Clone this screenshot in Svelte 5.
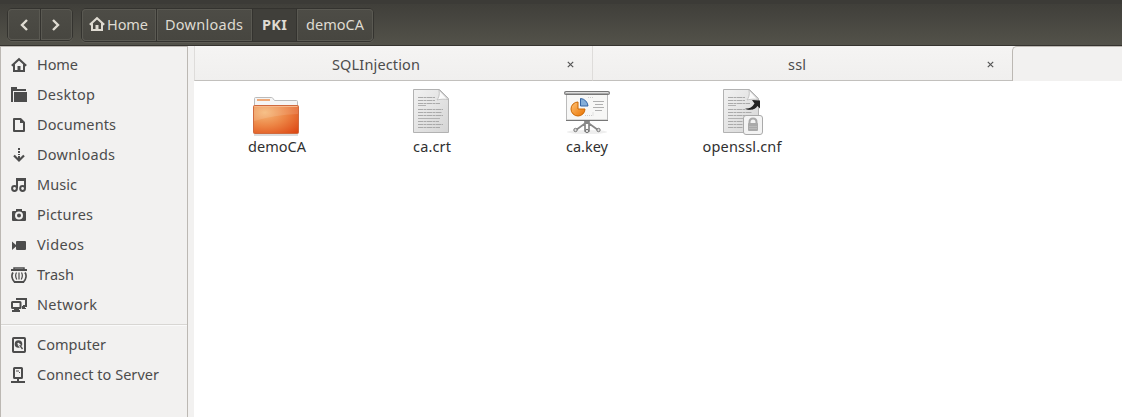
<script>
  const places = [
    { name: 'Home', icon: 'home', w: 41 },
    { name: 'Desktop', icon: 'desktop', w: 58 },
    { name: 'Documents', icon: 'document', w: 79 },
    { name: 'Downloads', icon: 'download', w: 78 },
    { name: 'Music', icon: 'music', w: 40 },
    { name: 'Pictures', icon: 'camera', w: 56 },
    { name: 'Videos', icon: 'video', w: 47 },
    { name: 'Trash', icon: 'trash', w: 37 },
    { name: 'Network', icon: 'network', w: 60 }
  ];
  const devices = [
    { name: 'Computer', icon: 'disk', w: 69 },
    { name: 'Connect to Server', icon: 'server', w: 122 }
  ];
  const files = [
    { name: 'demoCA', icon: 'folder', w: 58 },
    { name: 'ca.crt', icon: 'text', w: 38 },
    { name: 'ca.key', icon: 'slides', w: 42 },
    { name: 'openssl.cnf', icon: 'locked', w: 79 }
  ];
</script>

{#snippet symbol(name)}
  <svg class="symbol" viewBox="0 0 16 16" width="16" height="16">
    {#if name === 'home'}
      <path d="M.8 8.7 8 2.2l7.2 6.5M3 7.5V14h10V7.5" fill="none" stroke="currentColor" stroke-width="2" />
      <path d="M6.5 9h3v5h-3z" fill="currentColor" />
    {:else if name === 'desktop'}
      <path d="M0 0h6v2h9v2H2v11H0zM3 5h13v10H3z" fill="currentColor" />
    {:else if name === 'document'}
      <path d="M3 2h6.5L13 5.5V14H3z" fill="none" stroke="currentColor" stroke-width="2" stroke-linejoin="round" />
      <path d="M9 2v4h4.5z" fill="currentColor" />
    {:else if name === 'download'}
      <path d="M7 1h2v2H7zM7 4h2v2H7zM7 7h2v1H7zM7 9h2v4H7z" fill="currentColor" />
      <path d="m3 8.5 5 5 5-5" fill="none" stroke="currentColor" stroke-width="2.2" />
    {:else if name === 'music'}
      <path d="M6 11V2h8v9M6 3h8" fill="none" stroke="currentColor" stroke-width="2" />
      <circle cx="3.5" cy="11.5" r="2.4" fill="none" stroke="currentColor" stroke-width="2" />
      <circle cx="11.6" cy="11.5" r="2.4" fill="none" stroke="currentColor" stroke-width="2" />
    {:else if name === 'camera'}
      <path fill-rule="evenodd" d="M5 2h6v2h3q1 0 1 1v8q0 1-1 1H2q-1 0-1-1V5q0-1 1-1h3zM8 4.5a4 4 0 1 0 0 8 4 4 0 0 0 0-8zM8 6.5a2 2 0 1 1 0 4 2 2 0 0 1 0-4z" fill="currentColor" />
    {:else if name === 'video'}
      <path d="M1 4.5 5 8V5q0-1 1-1h8q1 0 1 1v7q0 1-1 1H6q-1 0-1-1V9.5L1 13z" fill="currentColor" />
    {:else if name === 'trash'}
      <path d="M3 2.500V1h10v1.500" fill="none" stroke="currentColor" stroke-width="1.500" />
      <path d="M0 2h16v2H0z" fill="currentColor" />
      <path d="M2 5.500C.3 8 .8 12 3.500 15h9C15.200 12 15.700 8 14 5.500" fill="none" stroke="currentColor" stroke-width="1.800" />
      <path d="M5.500 5.500c-1.200 2-.8 5 .3 7M10.500 5.500c1.200 2 .8 5-.3 7M8 5.500v7" fill="none" stroke="currentColor" stroke-width="1.200" />
    {:else if name === 'network'}
      <path d="M6 3V2h9v7h-3" fill="none" stroke="currentColor" stroke-width="2" />
      <rect x="1" y="5" width="8.5" height="6" rx=".5" fill="none" stroke="currentColor" stroke-width="2" />
      <path d="M3 11h5v2h1v2H1v-2h2zM11 9h3v2h1v1h-4z" fill="currentColor" />
    {:else if name === 'disk'}
      <rect x="2" y="1" width="12" height="14" rx=".7" fill="none" stroke="currentColor" stroke-width="2" />
      <circle cx="7.5" cy="7" r="3.8" fill="currentColor" />
      <path d="m7.7 7.3 4 5" stroke="#f2f1f0" stroke-width="2.6" />
      <path d="m8.700 8.200 2.800 3.800" stroke="currentColor" stroke-width="1.4" />
      <circle cx="7.4" cy="6.8" r="1" fill="#f2f1f0" />
    {:else}
      <rect x="3" y="1" width="8" height="10" rx=".5" fill="none" stroke="currentColor" stroke-width="2" />
      <path d="M5 3.5h3v1H5zM8 5h1v1H8zM6 11h2v3h6v2H0v-2h6z" fill="currentColor" />
    {/if}
  </svg>
{/snippet}

{#snippet place(item)}
  <div class="place">
    {@render symbol(item.icon)}
    <svg class="label" height="20" width={item.w + 2}><text x="0" y="14.5" textLength={item.w}>{item.name}</text></svg>
  </div>
{/snippet}

{#snippet page()}
  <path d="M5.5 1.5h26l9 9v34h-35z" fill="url(#paper)" stroke="#b2b2b2" />
  <path d="M31 2c1 5-.5 8-2 10 4-1 8-1 11-.5z" fill="#fafafa" stroke="#b9b9b9" stroke-width=".8" />
  <path d="M10 9.5h17M10 12.5h17M10 15.5h22M10 21.5h25M10 24.5h24M10 27.5h25M10 33.5h21M10 36.5h25M10 39.5h22" stroke="#aaa" stroke-dasharray="5 .5 3 .5" />
  <path d="M10 17.5h8M10 30.5h22" stroke="#b2b2b2" />
{/snippet}

<svg class="defs" width="0" height="0">
  <defs>
    <linearGradient id="paper" x2="1" y2="1"><stop stop-color="#f2f2f2" /><stop offset="1" stop-color="#d5d5d5" /></linearGradient>
    <radialGradient id="orange" cx=".25" cy=".25" r="1"><stop stop-color="#f5b878" /><stop offset=".5" stop-color="#ec8343" /><stop offset="1" stop-color="#dd4814" /></radialGradient>
    <linearGradient id="ball" x2="1" y2="1"><stop stop-color="#ffc174" /><stop offset="1" stop-color="#e97300" /></linearGradient>
  </defs>
</svg>

<div class="window">
  <header>
    <div class="group nav">
      <button aria-label="Back"><svg width="10" height="14"><path d="m8 2-5 5 5 5" /></svg></button>
      <button aria-label="Forward"><svg width="10" height="14"><path d="m2 2 5 5-5 5" /></svg></button>
    </div>
    <div class="group path">
      <button class="c-home">{@render symbol('home')}<svg class="label" width="43" height="20"><text y="14.5" textLength="41">Home</text></svg></button>
      <button class="c-down"><svg class="label" width="79" height="20"><text y="14.5" textLength="78">Downloads</text></svg></button>
      <button class="c-pki"><svg class="label" width="26" height="20"><text y="14.5" textLength="25">PKI</text></svg></button>
      <button class="c-demo"><svg class="label" width="59" height="20"><text y="14.5" textLength="58">demoCA</text></svg></button>
    </div>
  </header>
  <main>
    <aside>
      {#each places as item}{@render place(item)}{/each}
      <hr />
      {#each devices as item}{@render place(item)}{/each}
    </aside>
    <section>
      <nav class="tabs">
        <div class="tab first"><span class="title"><svg class="label" width="88" height="20"><text y="14.5" textLength="88">SQLInjection</text></svg></span><svg class="close" width="7" height="7"><path d="m.8.8 5.4 5.4m0-5.400L.8 6.2" /></svg></div>
        <div class="tab second"><span class="title"><svg class="label" width="18" height="20"><text y="14.5" textLength="18">ssl</text></svg></span><svg class="close" width="7" height="7"><path d="m.8.8 5.4 5.4m0-5.400L.8 6.2" /></svg></div>
        <div class="tab active"></div>
      </nav>
      <div class="files">
        {#each files as file}
          <div class="file">
            <svg width="48" height="48" viewBox="0 0 48 48">
              {#if file.icon === 'folder'}
                <g transform="translate(-1 0)">
                  <path d="M2 47h44" stroke="#ddd" stroke-width="2" />
                  <path d="M2.5 25V10.500q0-1 1-1h16q1 0 1.500 1l1.500 2h22q1 0 1 1v12z" fill="#f5f5f5" stroke="#bbb" />
                  <path d="M5 12h13" stroke="#efaa79" stroke-width="2" />
                  <rect x="1.500" y="17.500" width="45" height="28" rx="1" fill="url(#orange)" stroke="#cf6a3e" />
                  <path d="M2 18h44v8Q22 27 2 33z" fill="#fff" opacity=".12" />
                  <path d="M2.500 18.500h43" stroke="#f7b98c" />
                </g>
              {:else if file.icon === 'slides'}
                <ellipse cx="24" cy="44" rx="20" ry="2" fill="#eee" />
                <path d="M22 33h4v10h-4zM24 34 13 42M24 34l11 8" fill="none" stroke="#888" stroke-width="1.700" />
                <g fill="#ddd" stroke="#777"><circle cx="12.500" cy="42" r="1.700" /><circle cx="24" cy="43" r="1.700" /><circle cx="35.500" cy="42" r="1.700" /></g>
                <path d="M3.500 5h41v27h-41z" fill="#f7f7f6" stroke="#bbb" />
                <rect x="1.500" y="3.500" width="45" height="3" rx="1" fill="#aaa" stroke="#777" /><path d="M3 4.500h42" stroke="#ddd" />
                <path d="M3 32.500h42" stroke="#777" />
                <path d="M15 15v6h7a7 7 0 1 1-7-7z" fill="url(#ball)" stroke="#cb6600" />
                <path d="M17.500 10.500a8 8 0 0 1 7.500 7.500h-7.500z" fill="#83add8" stroke="#3465a4" />
                <path d="M30 13.500h11M32 16.500h8M30 19.500h11M32 22.500h7" stroke="#b0b0b0" />
                <path d="M25 9.500h5M22 27.500h8v-3" fill="none" stroke="#ccc" stroke-dasharray="1 1" />
              {:else}
                {@render page()}
                {#if file.icon === 'locked'}
                  <path d="m34 12 8 .5v8L39.500 18c-2.500 4-8.500 5-12.500 2.500 4 .5 6.500-.5 9.500-5z" fill="#222" />
                  <rect x="25.500" y="27.500" width="19" height="19" rx="2.500" fill="#f3f3f3" stroke="#aaa" />
                  <path d="M31.500 36v-2q0-3.500 3.500-3.500t3.500 3.500v2" fill="none" stroke="#aaa" stroke-width="2" />
                  <rect x="30" y="35" width="10" height="8" rx="1" fill="#aaa" /><path d="M31 38.500h8M31 40.500h8" stroke="#bbb" />
                {/if}
              {/if}
            </svg>
            <svg class="label" width="80" height="20"><text x="40" y="14.5" text-anchor="middle" textLength={file.w}>{file.name}</text></svg>
          </div>
        {/each}
      </div>
    </section>
  </main>
</div>

<style>
  :global(body) { margin: 0; }
  .defs { position: absolute; }
  .window { width: 1122px; height: 417px; overflow: hidden; display: flex; flex-direction: column; background: #fff; font: 14.5px "Noto Sans", sans-serif; }
  svg { display: block; flex: none; }
  .label { overflow: visible; fill: currentColor; }
  header { box-sizing: border-box; height: 46px; padding: 8px 7px 0; display: flex; gap: 8px; align-items: flex-start; color: #dfdbd2; background: linear-gradient(#3c3b37 0 4px, #403f3a 4px, #53524a 45px); border-bottom: 1px solid #35332f; }
  .group { box-sizing: border-box; display: flex; height: 33px; border: 1px solid #34332f; border-radius: 5px; box-shadow: 0 1px #5d5b54; }
  .nav { width: 66px; }
  .path { width: 293px; height: 34px; }
  button { box-sizing: border-box; padding: 0; margin: 0; border: 0; background: linear-gradient(#4d4c46, #474640); color: inherit; font: inherit; display: flex; align-items: center; justify-content: center; border-right: 1px solid #34332f; box-shadow: inset 0 0 0 1px #5a5952; }
  button:first-child { border-radius: 4px 0 0 4px; }
  button:last-child { border-right: 0; border-radius: 0 4px 4px 0; }
  .nav button { width: 32px; }
  .nav button:first-child { width: 33px; }
  .nav path { fill: none; stroke: #dfdbd2; stroke-width: 2.4; }
  .c-home { width: 75px; }
  .c-home .symbol { margin: -2px 2px 0 0; }
  .c-down { width: 96px; }
  .c-pki { width: 44px; background: #403f3a; box-shadow: none; font-weight: 700; }
  .c-demo { width: 76px; }
  main { flex: 1; display: flex; background: #f2f1f0; color: #4c4c4c; }
  aside { box-sizing: border-box; width: 188px; border: solid #bcb8b3; border-width: 1px 1px 0; padding-top: 3px; }
  .place { height: 30px; display: flex; align-items: center; gap: 10px; padding-left: 10px; }
  hr { height: 1px; border: 0; margin: 4px 0 5px; background: #d8d6d3; box-shadow: 0 1px #fafafa; }
  section { margin-left: 6px; width: 928px; background: #fff; display: flex; flex-direction: column; }
  .tabs { height: 35px; display: flex; background: #f2f1f0; }
  .tab { box-sizing: border-box; display: flex; align-items: center; border-bottom: 1px solid #c2c0bd; border-right: 1px solid #dedcda; background: linear-gradient(#f5f4f3, #f0efee); padding: 3px 17px 0 0; }
  .title { flex: 1; display: flex; justify-content: center; }
  .first { width: 399px; border-left: 1px solid #dedcda; padding-left: 12px; }
  .second { width: 419px; padding-left: 11px; border-right: 0; }
  .first .title { padding-right: 22px; }
  .second .title { padding-right: 0; }
  .first .title { box-sizing: border-box; }
  .second .title { margin-right: -2px; padding-left: 2px; }
  .second .close { margin-left: 2px; }
  .active { flex: 1; background: #f2f1f0; border: solid #bcb8b3; border-width: 1px 0 0 1px; border-radius: 5px 0 0 0; }
  .close path { fill: none; stroke: #555; stroke-width: 1.2; }
  .first { padding-right: 18px; }
  .second { padding-right: 18px; }
  .files { display: flex; padding: 7px 0 0 4px; color: #303030; }
  .file { width: 155px; display: flex; flex-direction: column; align-items: center; gap: 1px; padding-left: 3px; box-sizing: border-box; }
</style>
